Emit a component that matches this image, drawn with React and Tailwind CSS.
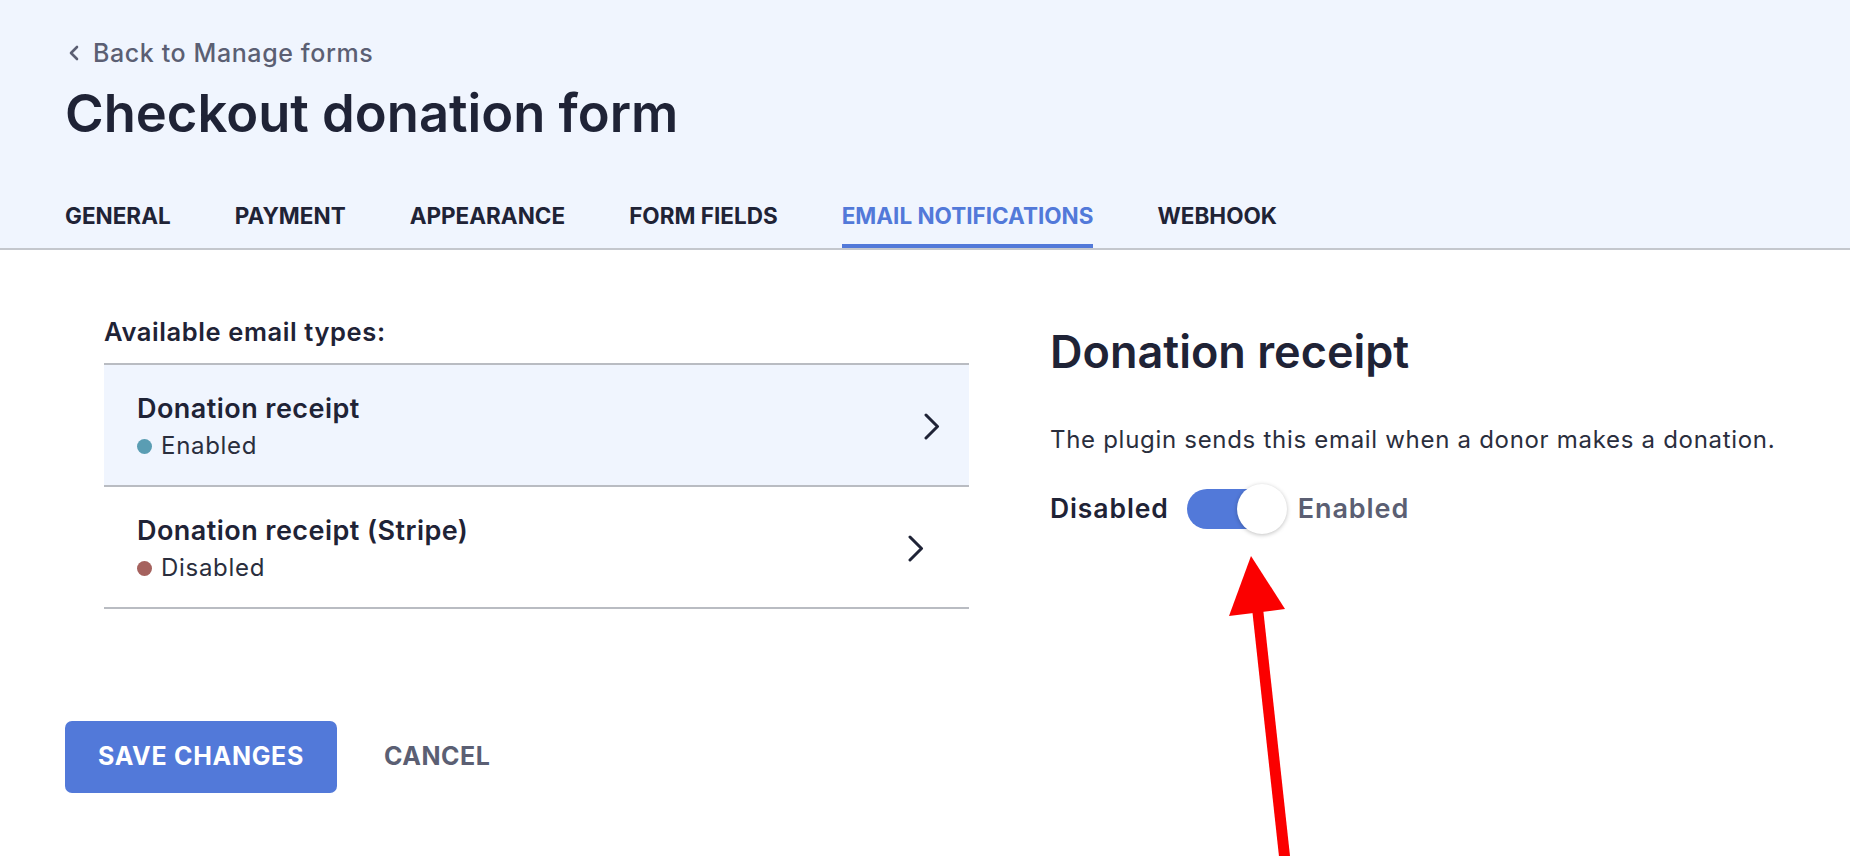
import React from "react";

function Chevron() {
  return (
    <svg width="16" height="27" viewBox="0 0 16 27" fill="none">
      <polyline points="2,2 13.5,13.5 2,25" stroke="#1f2336" strokeWidth="3" strokeLinecap="round" strokeLinejoin="round" />
    </svg>
  );
}

function Row({ title, status, dot, bg, chevronPad }) {
  return (
    <div className={`flex items-center justify-between border-b-2 border-[#b9bcc2] pl-[33px] pt-[27px] pb-[24px] ${bg} ${chevronPad}`}>
      <div className="flex flex-col gap-[5px]">
        <div className="text-[27px] leading-[34px] tracking-[0.45px] font-semibold text-[#1f2336]">{title}</div>
        <div className="flex items-center gap-[9px] text-[24px] leading-[30px] tracking-[0.7px] text-[#2a2e3d]">
          <span className={`w-[15px] h-[15px] rounded-full ${dot}`} />
          <span>{status}</span>
        </div>
      </div>
      <Chevron />
    </div>
  );
}

export default function App() {
  const tabs = ["GENERAL", "PAYMENT", "APPEARANCE", "FORM FIELDS", "EMAIL NOTIFICATIONS", "WEBHOOK"];
  return (
    <div className="relative min-h-[856px] bg-white overflow-hidden font-['Inter',sans-serif]">
      <header className="bg-[#f0f5fe] border-b-2 border-[#c4c7cd] px-[65px]">
        <div className="pt-[37px] flex items-center gap-[13px] text-[25px] leading-[32px] tracking-[0.6px] font-medium text-[#5b5f73]">
          <svg width="12" height="16" viewBox="0 0 12 16" fill="none" className="ml-[3px]">
            <polyline points="9,2 3,8 9,14" stroke="#5b5f73" strokeWidth="2.6" strokeLinecap="round" strokeLinejoin="round" />
          </svg>
          <span>Back to Manage forms</span>
        </div>
        <h1 className="mt-[16px] text-[52.5px] leading-[56px] font-semibold text-[#1f2336]">
          Checkout donation form
        </h1>
        <nav className="mt-[61px] flex gap-[64px]">
          {tabs.map((t) => {
            const active = t === "EMAIL NOTIFICATIONS";
            return (
              <div
                key={t}
                className={`text-[22.5px] leading-[28px] font-bold pb-[14px] border-b-4 ${
                  active ? "text-[#5279d9] border-[#5279d9]" : "text-[#1f2336] border-transparent"
                }`}
              >
                {t}
              </div>
            );
          })}
        </nav>
      </header>

      <main className="px-[65px]">
        <div className="flex items-start pt-[66px]">
          <section className="ml-[39px] w-[865px]">
            <div className="text-[25.5px] leading-[32px] tracking-[0.6px] font-semibold text-[#1f2336]">Available email types:</div>
            <div className="mt-[15px] border-t-2 border-[#b9bcc2]">
              <Row title="Donation receipt" status="Enabled" dot="bg-[#5a9db3]" bg="bg-[#f0f5fe]" chevronPad="pr-[29px]" />
              <Row title="Donation receipt (Stripe)" status="Disabled" dot="bg-[#a5625e]" bg="bg-white" chevronPad="pr-[45px]" />
            </div>
          </section>

          <section className="ml-[81px] mt-[10px]">
            <h2 className="text-[45px] leading-[52px] font-semibold text-[#1f2336]">Donation receipt</h2>
            <p className="mt-[46px] text-[24px] leading-[32px] tracking-[0.7px] text-[#2a2e3d]">
              The plugin sends this email when a donor makes a donation.
            </p>
            <div className="mt-[28px] flex items-center h-[50px]">
              <span className="text-[26.5px] tracking-[0.9px] font-semibold text-[#1f2336]">Disabled</span>
              <div className="relative ml-[18px] w-[100px] h-[50px]">
                <div className="absolute left-0 top-[5px] w-[88px] h-[40px] rounded-full bg-[#5279d9]" />
                <div className="absolute right-0 top-0 w-[50px] h-[50px] rounded-full bg-white shadow-[0_1px_4px_rgba(0,0,0,0.25)]" />
              </div>
              <span className="ml-[11px] text-[27px] tracking-[0.9px] font-semibold text-[#5b5f73]">Enabled</span>
            </div>
          </section>
        </div>

        <div className="mt-[112px] flex items-center gap-[47px]">
          <button className="h-[72px] px-[33px] rounded-[7px] bg-[#5279d9] text-white text-[25px] tracking-[0.7px] font-bold">
            SAVE CHANGES
          </button>
          <button className="text-[25px] tracking-[0.5px] font-bold text-[#5b5f73]">CANCEL</button>
        </div>
      </main>

      <svg className="absolute left-0 top-0 pointer-events-none" width="1850" height="856" viewBox="0 0 1850 856">
        <line x1="1257.5" y1="608" x2="1286" y2="870" stroke="#fb0000" strokeWidth="11" />
        <polygon points="1251,556 1229,616 1285,609" fill="#fb0000" />
      </svg>
    </div>
  );
}
